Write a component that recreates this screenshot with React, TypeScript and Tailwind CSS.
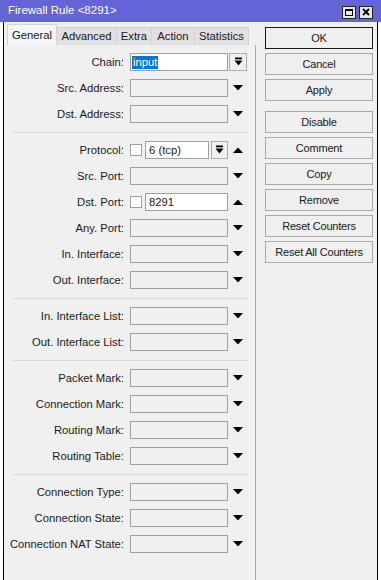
import React from "react";

type Row =
  | { kind: "sep" }
  | { kind: "row"; label: string; type?: "chain" | "protocol" | "dstport" | "empty" };

const rows: Row[] = [
  { kind: "row", label: "Chain:", type: "chain" },
  { kind: "row", label: "Src. Address:" },
  { kind: "row", label: "Dst. Address:" },
  { kind: "sep" },
  { kind: "row", label: "Protocol:", type: "protocol" },
  { kind: "row", label: "Src. Port:" },
  { kind: "row", label: "Dst. Port:", type: "dstport" },
  { kind: "row", label: "Any. Port:" },
  { kind: "row", label: "In. Interface:" },
  { kind: "row", label: "Out. Interface:" },
  { kind: "sep" },
  { kind: "row", label: "In. Interface List:" },
  { kind: "row", label: "Out. Interface List:" },
  { kind: "sep" },
  { kind: "row", label: "Packet Mark:" },
  { kind: "row", label: "Connection Mark:" },
  { kind: "row", label: "Routing Mark:" },
  { kind: "row", label: "Routing Table:" },
  { kind: "sep" },
  { kind: "row", label: "Connection Type:" },
  { kind: "row", label: "Connection State:" },
  { kind: "row", label: "Connection NAT State:" },
];

const tabs = [
  { name: "General", w: "w-[50px]" },
  { name: "Advanced", w: "w-[60px]" },
  { name: "Extra", w: "w-[35px]" },
  { name: "Action", w: "w-[43px]" },
  { name: "Statistics", w: "w-[54px]" },
];

const buttons = ["OK", "Cancel", "Apply", "Disable", "Comment", "Copy", "Remove", "Reset Counters", "Reset All Counters"];

function DownArrow() {
  return (
    <svg width="10" height="6" viewBox="0 0 10 6" className="block">
      <polygon points="0,0 10,0 5,5.5" fill="#000" />
    </svg>
  );
}

function UpArrow() {
  return (
    <svg width="10" height="6" viewBox="0 0 10 6" className="block">
      <polygon points="0,6 10,6 5,0.5" fill="#000" />
    </svg>
  );
}

function ComboButton({ w }: { w: string }) {
  return (
    <div className={`${w} h-[18px] border border-[#adadad] bg-[#f0f0f0] flex items-center justify-center`}>
      <svg width="9" height="10" viewBox="0 0 9 10" className="block">
        <rect x="1" y="0.5" width="7" height="1.8" fill="#000" />
        <polygon points="0.5,3.5 8.5,3.5 4.5,8.5" fill="#000" />
      </svg>
    </div>
  );
}

function Checkbox() {
  return <div className="w-[12px] h-[12px] border border-[#a0a0a0] bg-white shrink-0" />;
}

function Field({ row }: { row: Extract<Row, { kind: "row" }> }) {
  if (row.type === "chain") {
    return (
      <div className="flex items-center">
        <div className="w-[98px] h-[18px] border border-[#a0a0a0] bg-white flex items-center pl-[1px]">
          <span className="bg-[#0078d7] text-white leading-[13px] px-[1px]">input</span>
        </div>
        <div className="ml-[1px]">
          <ComboButton w="w-[18px]" />
        </div>
      </div>
    );
  }
  if (row.type === "protocol") {
    return (
      <div className="flex items-center">
        <Checkbox />
        <div className="ml-[3px] w-[64px] h-[18px] border border-[#a0a0a0] bg-white flex items-center pl-[3px]">
          6 (tcp)
        </div>
        <div className="ml-[2px]">
          <ComboButton w="w-[17px]" />
        </div>
        <div className="ml-[5px]">
          <UpArrow />
        </div>
      </div>
    );
  }
  if (row.type === "dstport") {
    return (
      <div className="flex items-center">
        <Checkbox />
        <div className="ml-[3px] w-[83px] h-[18px] border border-[#a0a0a0] bg-white flex items-center pl-[3px]">
          8291
        </div>
        <div className="ml-[5px]">
          <UpArrow />
        </div>
      </div>
    );
  }
  return (
    <div className="flex items-center">
      <div className="w-[98px] h-[18px] border border-[#a0a0a0] bg-[#f0f0f0]" />
      <div className="ml-[5px]">
        <DownArrow />
      </div>
    </div>
  );
}

export default function App() {
  return (
    <div
      className="w-[381px] h-[580px] overflow-hidden bg-white flex flex-col text-[11px] text-[#1a1a1a]"
      style={{ fontFamily: '"Liberation Sans", Arial, sans-serif' }}
    >
      {/* title bar */}
      <div className="h-[22px] bg-[#6464d6] flex items-center pl-[8px] pr-[8px] shrink-0">
        <span className="text-white text-[11.5px] flex-1">Firewall Rule &lt;8291&gt;</span>
        <div className="flex gap-[3px] pt-[2px]">
          <div className="w-[14px] h-[13px] bg-[#e8e8e8] border border-[#222] flex items-center justify-center">
            <div className="w-[8px] h-[7px] border border-black border-t-2" />
          </div>
          <div className="w-[14px] h-[13px] bg-[#e8e8e8] border border-[#222] flex items-center justify-center">
            <svg width="8" height="8" viewBox="0 0 8 8" className="block">
              <path d="M1 1 L7 7 M7 1 L1 7" stroke="#000" strokeWidth="1.8" />
            </svg>
          </div>
        </div>
      </div>

      <div className="flex flex-1 min-h-0">
        <div className="w-[3px] bg-white shrink-0" />
        <div className="w-[1px] bg-black shrink-0" />

        <div className="flex flex-1 bg-[#f0f0f0]">
          {/* left: tabs + form */}
          <div className="ml-[2px] w-[250px] flex flex-col">
            <div className="h-[23px] flex items-end pl-[1px] text-[11.25px]">
              {tabs.map((t, i) =>
                i === 0 ? (
                  <div
                    key={t.name}
                    className={`${t.w} h-[21px] bg-[#f5f5f5] border border-b-0 border-[#d4d4d4] flex items-center justify-center`}
                  >
                    {t.name}
                  </div>
                ) : (
                  <div
                    key={t.name}
                    className={`${t.w} h-[18px] bg-[#e0e0e0] border-r border-t border-[#d0d0d0] flex items-center justify-center`}
                  >
                    {t.name}
                  </div>
                )
              )}
            </div>
            <div className="flex-1 border-r border-[#a9a9a9] pt-[4px] text-[11.25px]">
              {rows.map((r, i) =>
                r.kind === "sep" ? (
                  <div key={i} className="h-[10px] flex items-center px-[7px]">
                    <div className="h-[1px] w-full bg-[#d9d9d9]" />
                  </div>
                ) : (
                  <div key={i} className="h-[26px] flex items-center">
                    <div className="w-[118px] text-right whitespace-nowrap">{r.label}</div>
                    <div className="ml-[6px]">
                      <Field row={r} />
                    </div>
                  </div>
                )
              )}
            </div>
          </div>

          {/* right: buttons */}
          <div className="ml-[9px] w-[108px] pt-[5px] flex flex-col gap-[4px]">
            {buttons.map((b) => (
              <div
                key={b}
                className={`h-[22px] flex items-center justify-center bg-[#efefef] border tracking-[-0.2px] ${
                  b === "OK" ? "border-[#1a1a1a]" : "border-[#a8a8a8]"
                } ${b === "Disable" ? "mt-[6px]" : ""}`}
              >
                {b}
              </div>
            ))}
          </div>
        </div>

        <div className="w-[1px] bg-black shrink-0" />
        <div className="w-[3px] bg-white shrink-0" />
      </div>
    </div>
  );
}
